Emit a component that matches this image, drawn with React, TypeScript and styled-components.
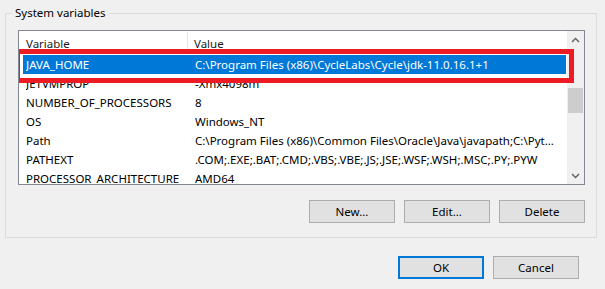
import styled, { createGlobalStyle } from "styled-components";

const GlobalStyle = createGlobalStyle`
  html, body {
    margin: 0;
    padding: 0;
    background: #f0f0f0;
  }
  body {
    font-family: "Noto Sans", "Open Sans", "Liberation Sans", sans-serif;
    font-size: 11.5px;
    color: #000;
  }
`;

const Dialog = styled.div`
  width: 605px;
  height: 289px;
  box-sizing: border-box;
  padding: 5px 8px 0 5px;
  display: flex;
  flex-direction: column;
`;

const GroupBox = styled.fieldset`
  margin: 0;
  min-width: 0;
  border: 1px solid #dcdcdc;
  padding: 9px 11px 14px 12px;
  display: flex;
  flex-direction: column;
`;

const Legend = styled.legend`
  margin-left: -6px;
  padding: 0 3px;
  line-height: 16px;
  color: #000;
`;

const ListBox = styled.div`
  position: relative;
  height: 155px;
  box-sizing: border-box;
  border: 1px solid #828790;
  background: #fff;
  display: flex;
  overflow: hidden;
`;

const ListBody = styled.div`
  flex: 1;
  display: flex;
  flex-direction: column;
  min-width: 0;
`;

const Header = styled.div`
  display: grid;
  grid-template-columns: 169px 1fr;
  height: 24px;
  flex-shrink: 0;
`;

const HeaderCell = styled.div<{ $first?: boolean }>`
  display: flex;
  align-items: center;
  padding-left: ${(p) => (p.$first ? "7px" : "6px")};
  border-right: ${(p) => (p.$first ? "1px solid #e5e5e5" : "none")};
  box-sizing: border-box;
  color: #1a1a1a;
  height: 22px;
  margin-top: 1px;
`;

const Row = styled.div<{ $selected?: boolean }>`
  display: grid;
  grid-template-columns: 169px 1fr;
  height: 19px;
  flex-shrink: 0;
  align-items: center;
  margin: 0 1px 0 4px;
  padding-left: 3px;
  white-space: nowrap;
  overflow: hidden;
  background: ${(p) => (p.$selected ? "#0078d7" : "transparent")};
  color: ${(p) => (p.$selected ? "#fff" : "#000")};
`;

const Cell = styled.span`
  overflow: hidden;
`;

const ScrollBar = styled.div`
  width: 17px;
  flex-shrink: 0;
  background: #f0f0f0;
  display: flex;
  flex-direction: column;
  align-items: center;
`;

const Arrow = styled.div`
  width: 17px;
  height: 17px;
  display: flex;
  align-items: center;
  justify-content: center;
  flex-shrink: 0;
`;

const Track = styled.div`
  flex: 1;
  width: 100%;
  display: flex;
  flex-direction: column;
  align-items: center;
  padding-top: 40px;
  box-sizing: border-box;
`;

const Thumb = styled.div`
  width: 15px;
  height: 25px;
  background: #cdcdcd;
`;

const Highlight = styled.div`
  position: absolute;
  left: -4px;
  top: 18px;
  width: 559px;
  height: 34px;
  box-sizing: border-box;
  border: 5px solid #ed1c24;
  pointer-events: none;
`;

const ButtonRow = styled.div<{ $inset?: number }>`
  display: flex;
  justify-content: flex-end;
  gap: 9px;
  margin-right: ${(p) => p.$inset ?? 0}px;
`;

const GroupButtons = styled(ButtonRow)`
  margin-top: 15px;
`;

const Footer = styled(ButtonRow)`
  margin-top: 18px;
`;

const Button = styled.button<{ $default?: boolean }>`
  width: 86px;
  height: 23px;
  box-sizing: border-box;
  margin: 0;
  padding: 0;
  font: inherit;
  color: #000;
  background: #e1e1e1;
  border: ${(p) => (p.$default ? "2px solid #0078d7" : "1px solid #adadad")};
  border-radius: 0;
`;

const Chevron = ({ up }: { up?: boolean }) => (
  <svg width="9" height="6" viewBox="0 0 9 6">
    <polyline
      points={up ? "1,5 4.5,1.5 8,5" : "1,1 4.5,4.5 8,1"}
      fill="none"
      stroke="#606060"
      strokeWidth="1.4"
    />
  </svg>
);

const variables = [
  ["JAVA_HOME", "C:\\Program Files (x86)\\CycleLabs\\Cycle\\jdk-11.0.16.1+1"],
  ["JETVMPROP", "-Xmx4098m"],
  ["NUMBER_OF_PROCESSORS", "8"],
  ["OS", "Windows_NT"],
  ["Path", "C:\\Program Files (x86)\\Common Files\\Oracle\\Java\\javapath;C:\\Pyt..."],
  ["PATHEXT", ".COM;.EXE;.BAT;.CMD;.VBS;.VBE;.JS;.JSE;.WSF;.WSH;.MSC;.PY;.PYW"],
  ["PROCESSOR_ARCHITECTURE", "AMD64"],
];

export default function App() {
  return (
    <>
      <GlobalStyle />
      <Dialog>
        <GroupBox>
          <Legend>System variables</Legend>
          <ListBox>
            <ListBody>
              <Header>
                <HeaderCell $first>Variable</HeaderCell>
                <HeaderCell>Value</HeaderCell>
              </Header>
              {variables.map(([name, value], i) => (
                <Row key={name} $selected={i === 0}>
                  <Cell>{name}</Cell>
                  <Cell>{value}</Cell>
                </Row>
              ))}
            </ListBody>
            <ScrollBar>
              <Arrow>
                <Chevron up />
              </Arrow>
              <Track>
                <Thumb />
              </Track>
              <Arrow>
                <Chevron />
              </Arrow>
            </ScrollBar>
            <Highlight />
          </ListBox>
          <GroupButtons>
            <Button>New...</Button>
            <Button>Edit...</Button>
            <Button>Delete</Button>
          </GroupButtons>
        </GroupBox>
        <Footer $inset={18}>
          <Button $default>OK</Button>
          <Button>Cancel</Button>
        </Footer>
      </Dialog>
    </>
  );
}
